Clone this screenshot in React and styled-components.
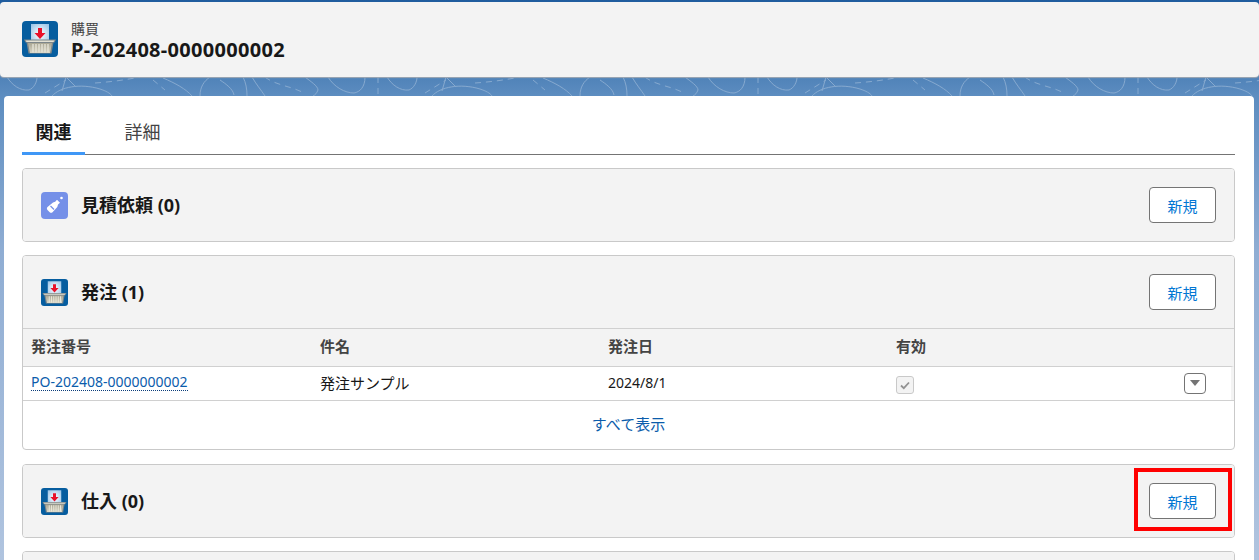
import React from 'react'
import styled, { createGlobalStyle } from 'styled-components'

const GlobalStyle = createGlobalStyle`
  html, body {
    margin: 0;
    padding: 0;
    height: 560px;
    overflow: hidden;
  }
  body {
    font-family: 'Noto Sans', 'Noto Sans CJK JP', sans-serif;
    color: #181818;
  }
  * {
    box-sizing: border-box;
  }
`

const Page = styled.div`
  position: relative;
  height: 560px;
  overflow: hidden;
  padding: 2px 5px 0 4px;
  background: linear-gradient(
    to bottom,
    #1f5c9e 0px,
    #4f82b8 76px,
    #5d8dc0 96px,
    #8fadd3 250px,
    #b0c4df 560px
  );
`

const Contours = styled.svg`
  position: absolute;
  left: 0;
  top: 77px;
  width: 1259px;
  height: 19px;
`

const Header = styled.header`
  position: relative;
  display: flex;
  align-items: center;
  gap: 13px;
  height: 75px;
  margin: 0 -5px 0 -4px;
  padding: 0 22px 2px;
  background: #f3f3f3;
  border-radius: 4px;
  box-shadow: 0 1px 1px #9fa8b3;
`

const HeaderText = styled.div`
  display: flex;
  flex-direction: column;
  padding-top: 4px;
`

const Crumb = styled.div`
  font-size: 14px;
  line-height: 17px;
  color: #444;
`

const RecordName = styled.div`
  font-size: 20px;
  line-height: 25px;
  font-weight: 700;
  letter-spacing: 0.3px;
  color: #181818;
`

const Card = styled.main`
  position: relative;
  margin-top: 19px;
  padding: 14px 19px 0 18px;
  height: 470px;
  background: #fff;
  border-radius: 4px 4px 0 0;
`

const Tabs = styled.nav`
  display: flex;
  height: 45px;
  border-bottom: 1px solid #747474;
  margin-bottom: 13px;
`

const Tab = styled.div`
  width: ${p => (p.$active ? '63px' : '75px')};
  margin-left: ${p => (p.$active ? '0' : '20px')};
  height: 45px;
  padding-top: 9px;
  text-align: center;
  font-size: 18px;
  line-height: 26px;
  font-weight: ${p => (p.$active ? 700 : 400)};
  color: ${p => (p.$active ? '#181818' : '#444')};
  border-bottom: ${p => (p.$active ? '3px solid #3f97f6' : 'none')};
`

const Panel = styled.section`
  margin-bottom: ${p => p.$gap || 13}px;
  border: 1px solid #c9c9c9;
  border-radius: 4px;
  background: #fff;
  overflow: hidden;
`

const PanelHeader = styled.div`
  display: flex;
  align-items: center;
  justify-content: space-between;
  height: 72px;
  padding: 0 18px;
  background: #f3f3f3;
`

const PanelTitle = styled.h2`
  display: flex;
  align-items: center;
  gap: 13px;
  margin: 0;
  font-size: 18px;
  line-height: 22px;
  font-weight: 700;
  color: #181818;
`

const NewButton = styled.button`
  width: 67px;
  height: 36px;
  padding: 0;
  font-family: inherit;
  font-size: 15px;
  color: #0176d3;
  background: #fff;
  border: 1px solid #747474;
  border-radius: 4px;
`

const Highlight = styled.div`
  position: absolute;
  left: 1130px;
  top: 372px;
  width: 98px;
  height: 63px;
  border: 4px solid #ff0000;
  pointer-events: none;
`

const Row = styled.div`
  display: grid;
  grid-template-columns: 289px 288px 288px 1fr 52px;
  align-items: center;
  padding-left: 8px;
  height: ${p => (p.$head ? '38px' : '34px')};
  background: ${p => (p.$head ? '#f3f3f3' : '#fff')};
  border-top: 1px solid #d0d0d0;
  border-right: ${p => (p.$head ? 'none' : '3px solid #f3f3f3')};
  font-size: ${p => (p.$head ? '14px' : '15px')};
  line-height: ${p => (p.$head ? '32px' : '30px')};
  color: ${p => (p.$head ? '#444' : '#181818')};
  font-weight: ${p => (p.$head ? 700 : 400)};
  padding-bottom: ${p => (p.$head ? '3px' : '2px')};
`

const HeadCell = styled.span`
  font-size: 15px;
`

const RecordLink = styled.span`
  color: #0b5cab;
  font-size: 14px;
  border-bottom: 1px dotted #0b3d7a;
  justify-self: start;
  line-height: 16px;
`

const DateCell = styled.span`
  font-size: 14px;
`

const Check = styled.span`
  display: inline-flex;
  align-items: center;
  justify-content: center;
  width: 18px;
  height: 18px;
  margin-top: 2px;
  background: #f3f3f3;
  border: 1px solid #c9c9c9;
  border-radius: 3px;
  vertical-align: middle;
`

const RowMenu = styled.span`
  display: inline-flex;
  align-items: center;
  justify-content: center;
  width: 22px;
  height: 21px;
  margin: 1px 0 0 5px;
  background: #fff;
  border: 1px solid #747474;
  border-radius: 4px;
  &::after {
    content: '';
    border-left: 5px solid transparent;
    border-right: 5px solid transparent;
    border-top: 6px solid #747474;
  }
`

const ViewAll = styled.div`
  height: 49px;
  border-top: 1px solid #d0d0d0;
  text-align: center;
  line-height: 46px;
  font-size: 15px;
  color: #0b5cab;
`

const BasketIcon = ({ size = 27 }) => (
  <svg width={size} height={size} viewBox="0 0 36 36">
    <defs>
      <radialGradient id="paperGlow" cx="50%" cy="50%" r="65%">
        <stop offset="0%" stopColor="#ffffff" />
        <stop offset="100%" stopColor="#9cc5e8" />
      </radialGradient>
      <linearGradient id="basketBody" x1="0" y1="0" x2="0" y2="1">
        <stop offset="0%" stopColor="#a9a693" />
        <stop offset="100%" stopColor="#d9d6c6" />
      </linearGradient>
    </defs>
    <rect width="36" height="36" rx="4" fill="#065d9f" />
    <rect x="9" y="3" width="18" height="20" fill="url(#paperGlow)" />
    <path d="M16 7h4v5h3.500L18 18 12.500 12H16z" fill="#e8102a" />
    <path d="M2 18.500h32l-1.500 3h-1l-2 11h-23l-2-11h-1z" fill="#7d868a" />
    <path d="M3.500 19.500h29l-1 1.500h-27z" fill="#e3e1d3" />
    <path d="M6 22h24l-2 10H8z" fill="url(#basketBody)" />
    <path
      d="M11 23v8.500M14 23v8.500M17 23v8.500M20 23v8.500M23 23v8.500M26 23v8.500"
      stroke="#e9e7da"
      strokeWidth="1.300"
    />
  </svg>
)

const BottleIcon = () => (
  <svg width="27" height="27" viewBox="0 0 27 27">
    <rect width="27" height="27" rx="4" fill="#7590e8" />
    <path
      d="M6.500 15l5.500-4.500 2.200-.7 1.800-2.100 3 3-2 1.900-.7 2.300-4.800 5.300c-.8.8-2 .8-2.800 0l-2.200-2.300c-.8-.8-.8-2 0-2.900z"
      fill="#fff"
    />
    <circle cx="20.500" cy="6" r="1.300" fill="#fff" />
    <path d="M9.500 14l3.500 3.500" stroke="#7590e8" strokeWidth="1.200" />
  </svg>
)

const CheckMark = () => (
  <svg width="12" height="12" viewBox="0 0 12 12">
    <path d="M2 6.500l2.800 2.700L10 3.500" fill="none" stroke="#939393" strokeWidth="1.800" />
  </svg>
)

const ContourBand = () => (
  <Contours>
    <defs>
      <pattern id="contourTile" x="220" y="0" width="380" height="19" patternUnits="userSpaceOnUse">
        <g fill="none" stroke="#86a9cf" strokeWidth="1">
          <path d="M0 3C6 7 13 12 14 18M23 0C26 6 27 12 27 19M32 0C36 7 41 13 45 19" />
          <path d="M85 0C90 4 98 9 98 13C97 16 95 18 93 19M108 0C114 10 125 16 134 16C140 15 145 10 145 0" />
          <path d="M167 0C172 8 180 14 189 13C194 11 197 5 197 0M222 14L226 0L236 10" />
          <path d="M212 19C220 10 240 6 260 12C266 14 270 16 272 19M323 1C335 6 346 12 352 19M360 19C360 10 364 4 370 0" />
          <g strokeDasharray="6 5">
            <path d="M45 0C55 8 70 9 82 15M158 0V19M205 16L226 3" />
            <path d="M255 6C270 5 285 3 300 0M313 3L325 13" />
          </g>
        </g>
      </pattern>
    </defs>
    <rect width="1259" height="19" fill="url(#contourTile)" />
  </Contours>
)

const App = () => {
  return (
    <Page>
      <GlobalStyle />
      <ContourBand />
      <Header>
        <BasketIcon size={36} />
        <HeaderText>
          <Crumb>購買</Crumb>
          <RecordName>P-202408-0000000002</RecordName>
        </HeaderText>
      </Header>
      <Card>
        <Tabs>
          <Tab $active>関連</Tab>
          <Tab>詳細</Tab>
        </Tabs>
        <Panel>
          <PanelHeader>
            <PanelTitle>
              <BottleIcon />
              見積依頼 (0)
            </PanelTitle>
            <NewButton>新規</NewButton>
          </PanelHeader>
        </Panel>
        <Panel $gap={14}>
          <PanelHeader>
            <PanelTitle>
              <BasketIcon />
              発注 (1)
            </PanelTitle>
            <NewButton>新規</NewButton>
          </PanelHeader>
          <Row $head>
            <HeadCell>発注番号</HeadCell>
            <HeadCell>件名</HeadCell>
            <HeadCell>発注日</HeadCell>
            <HeadCell>有効</HeadCell>
            <span />
          </Row>
          <Row>
            <RecordLink>PO-202408-0000000002</RecordLink>
            <span>発注サンプル</span>
            <DateCell>2024/8/1</DateCell>
            <span>
              <Check>
                <CheckMark />
              </Check>
            </span>
            <RowMenu />
          </Row>
          <ViewAll>すべて表示</ViewAll>
        </Panel>
        <Panel>
          <PanelHeader>
            <PanelTitle>
              <BasketIcon />
              仕入 (0)
            </PanelTitle>
            <NewButton>新規</NewButton>
          </PanelHeader>
        </Panel>
        <Panel>
          <PanelHeader />
        </Panel>
        <Highlight />
      </Card>
    </Page>
  )
}

export default App
